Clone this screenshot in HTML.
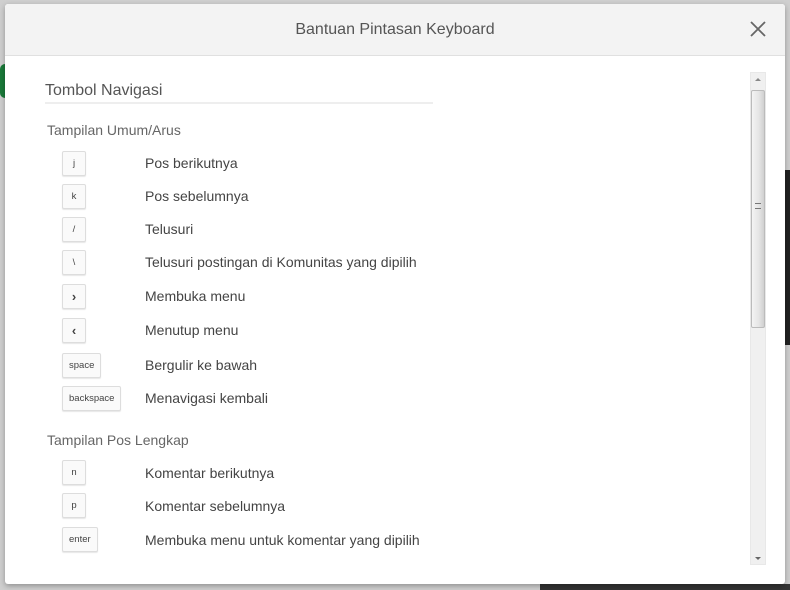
<!DOCTYPE html>
<html><head><meta charset="utf-8"><style>
*{margin:0;padding:0;box-sizing:border-box}
body{width:790px;height:590px;overflow:hidden;background:#cfcfcf;font-family:"Liberation Sans",sans-serif;position:relative}
.modal{position:absolute;left:5px;top:4px;width:780px;height:580px;background:#fff;border-radius:3px;box-shadow:0 2px 6px rgba(0,0,0,.3);overflow:hidden}
.hdr{height:52px;background:#f3f3f3;border-bottom:1px solid #e0e0e0;text-align:center;line-height:52px;font-size:16px;color:#555}
.x{position:absolute;left:745px;top:17px;width:16px;height:16px}
.h{position:absolute;left:40px;top:78px;width:388px;font-size:16px;color:#555;border-bottom:2px solid #eee;padding-bottom:2px}
.sub{position:absolute;left:42px;font-size:14px;color:#666}
.k{position:absolute;left:57px;height:25px;min-width:24px;padding:0 6px;border:1px solid #ddd;border-radius:2px;background:#fafafa;box-shadow:0 1px 1px rgba(0,0,0,.1);font-size:9.5px;color:#444;line-height:23px;text-align:center}
.k.b{font-size:13px;font-weight:bold}
.t{position:absolute;left:140px;font-size:14px;color:#444}
.sb{position:absolute;left:745px;top:68px;width:16px;height:493px;background:#f0f0f0;border:1px solid #e8e8e8}
.th{position:absolute;left:0;top:17px;width:14px;height:238px;background:linear-gradient(90deg,#f4f4f4,#e4e4e4 60%,#d0d0d0);border:1px solid #bbb;border-radius:2px}
</style></head><body>
<div style="position:absolute;left:0;top:64px;width:10px;height:34px;border-radius:17px;background:#1a7a3a"></div>
<div style="position:absolute;left:785px;top:170px;width:5px;height:175px;background:#222"></div>
<div style="position:absolute;left:540px;top:584px;width:250px;height:6px;background:#333"></div>
<div class="modal">
<div class="hdr">Bantuan Pintasan Keyboard</div>
<svg class="x" viewBox="0 0 16 16"><path d="M1 1L15 15M15 1L1 15" stroke="#666" stroke-width="1.8"/></svg>
<div class="h">Tombol Navigasi</div>
<div class="sub" style="top:118px">Tampilan Umum/Arus</div>
<div class="k" style="top:147px">j</div><div class="t" style="top:151px">Pos berikutnya</div>
<div class="k" style="top:180px">k</div><div class="t" style="top:184px">Pos sebelumnya</div>
<div class="k" style="top:213px">/</div><div class="t" style="top:217px">Telusuri</div>
<div class="k" style="top:246px">\</div><div class="t" style="top:250px">Telusuri postingan di Komunitas yang dipilih</div>
<div class="k b" style="top:280px">›</div><div class="t" style="top:284px">Membuka menu</div>
<div class="k b" style="top:314px">‹</div><div class="t" style="top:318px">Menutup menu</div>
<div class="k" style="top:349px">space</div><div class="t" style="top:353px">Bergulir ke bawah</div>
<div class="k" style="top:382px">backspace</div><div class="t" style="top:386px">Menavigasi kembali</div>
<div class="sub" style="top:428px">Tampilan Pos Lengkap</div>
<div class="k" style="top:456px">n</div><div class="t" style="top:461px">Komentar berikutnya</div>
<div class="k" style="top:489px">p</div><div class="t" style="top:494px">Komentar sebelumnya</div>
<div class="k" style="top:523px">enter</div><div class="t" style="top:528px">Membuka menu untuk komentar yang dipilih</div>
<div class="sb"><div style="position:absolute;left:4px;top:5px;border:3px solid transparent;border-bottom:3px solid #888;border-top:0"></div><div class="th"><div style="position:absolute;left:3px;top:112px;width:6px;height:6px;border-top:1px solid #777;border-bottom:1px solid #777"></div></div><div style="position:absolute;left:4px;bottom:4px;border:3px solid transparent;border-top:3px solid #666;border-bottom:0"></div></div>
</div>
</body></html>
